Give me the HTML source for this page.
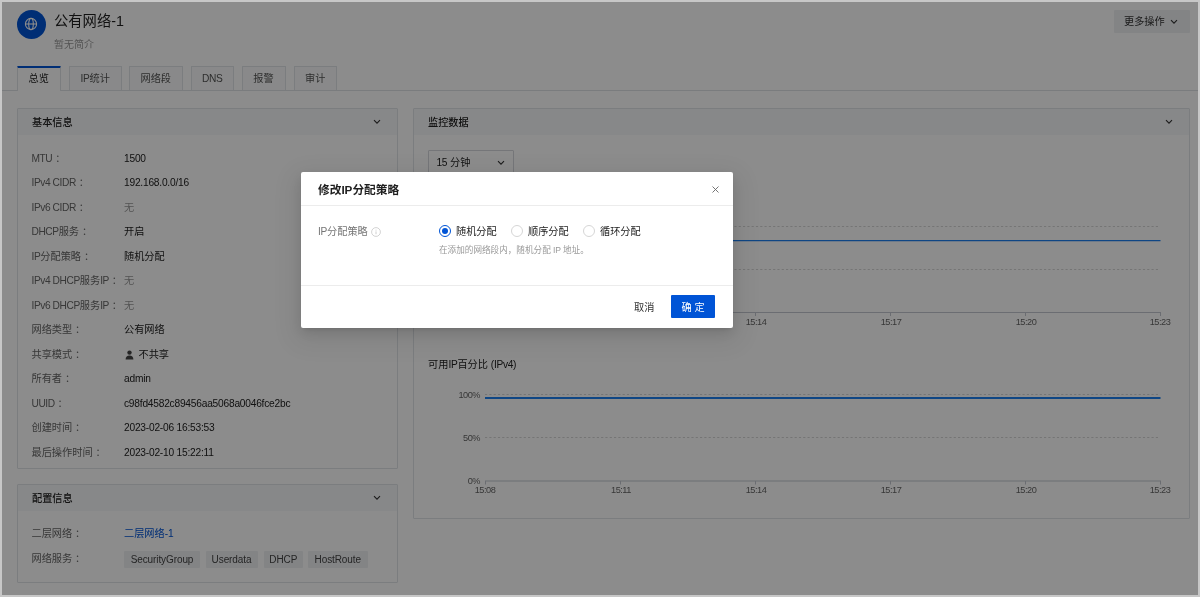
<!DOCTYPE html>
<html lang="zh-CN">
<head>
<meta charset="utf-8">
<title>公有网络-1</title>
<style>
*{box-sizing:border-box;margin:0;padding:0}
html,body{width:1200px;height:597px;overflow:hidden;background:#c7c7c7}
body{font-family:"Liberation Sans","Noto Sans CJK SC",sans-serif;font-size:10.2px;color:#333;position:relative}
#page{position:absolute;left:2px;top:2px;width:1196px;height:593px;background:#fff;overflow:hidden}
#inner{will-change:transform;position:absolute;left:-2px;top:-2px;width:1200px;height:597px}
.abs{position:absolute;white-space:nowrap}
/* header */
#logo{left:16.5px;top:10px;width:29px;height:29px;border-radius:50%;background:#0054d6}
#logo svg{position:absolute;left:7.5px;top:7px}
#title{left:54px;top:10px;font-size:14.3px;line-height:22px;color:#1f1f1f}
#desc{left:54px;top:38px;font-size:10px;line-height:14px;color:#999}
#more{left:1114px;top:10px;width:76px;height:23px;background:#eef0f3;border-radius:1px;line-height:24px;padding-left:10px;color:#333}
/* tabs */
#tabline{left:0;top:90px;width:1200px;height:1px;background:#dfe2e6}
.tab{top:66px;height:24px;border:1px solid #e1e4e8;border-bottom:none;background:#f9fafb;text-align:center;line-height:23px;color:#555;border-radius:1px 1px 0 0}
.tab.on{background:#fff;border-top:2px solid #0054d6;height:25px;color:#222;line-height:22px}
/* cards */
.card{border:1px solid #e0e3e7;background:#fff;border-radius:1px}
.chead{left:0;top:0;right:0;height:26px;background:#f6f7f9;line-height:27px;padding-left:14px;color:#222;font-weight:500}
.chev{position:absolute;right:16px;top:10px}
.lab{left:31.5px;color:#666;line-height:14px}
.val{left:124px;color:#222;line-height:14px}
.none{color:#999}
.tag{top:550.5px;height:17px;line-height:18px;background:#eef0f3;color:#444;padding:0;text-align:center;border-radius:1px;font-size:10px;letter-spacing:-.1px}
/* chart */
.ax{font-size:8.6px;color:#666;line-height:10px}
/* overlay + modal */
#mask{left:0;top:0;width:1196px;height:593px;background:rgba(0,0,0,.45)}
#modal{will-change:transform;left:301px;top:172px;width:432px;height:156px;background:#fff;border-radius:2px;box-shadow:0 3px 5px -3px rgba(0,0,0,.14),0 5px 14px 0 rgba(0,0,0,.10),0 8px 24px 7px rgba(0,0,0,.07)}
#mhead{left:0;top:0;width:432px;height:34px;border-bottom:1px solid #ececec}
#mtitle{left:17px;top:9px;font-size:11.7px;font-weight:bold;line-height:18px;color:#1f1f1f}
#mfoot{left:0;top:113px;width:432px;height:43px;border-top:1px solid #ececec}
.radio{top:53px;width:12px;height:12px;border:1px solid #d6d6d6;border-radius:50%;background:#fff}
.radio.on{border-color:#0054d6}
.radio.on::after{content:"";position:absolute;left:2px;top:2px;width:6px;height:6px;border-radius:50%;background:#0054d6}
.rl{top:52px;line-height:15px;color:#222}
#ok{left:370px;top:123px;width:44px;height:23px;background:#0054d6;color:#fff;text-align:center;line-height:25px;border-radius:1px}
.l{letter-spacing:-.3px}
.lab .l{letter-spacing:-.42px}
.val .l{letter-spacing:-.22px}
</style>
</head>
<body>
<div id="page"><div id="inner">

<div id="logo" class="abs"><svg width="14" height="14" viewBox="0 0 14 14" fill="none" stroke="#fff" stroke-width="1.1"><circle cx="7" cy="7" r="5.6"/><ellipse cx="7" cy="7" rx="2.3" ry="5.6"/><path d="M1.4 7h11.2"/></svg></div>
<div id="title" class="abs">公有网络-1</div>
<div id="desc" class="abs">暂无简介</div>
<div id="more" class="abs">更多操作 <svg width="8" height="6" viewBox="0 0 8 6" style="position:absolute;left:56px;top:9px"><path d="M1 1.2l3 3 3-3" fill="none" stroke="#333" stroke-width="1.1"/></svg></div>

<div id="tabline" class="abs"></div>
<div class="abs tab on" style="left:16.5px;width:44.5px">总览</div>
<div class="abs tab" style="left:68.5px;width:53.5px"><span class="l">IP</span>统计</div>
<div class="abs tab" style="left:129px;width:53.5px">网络段</div>
<div class="abs tab" style="left:190.5px;width:43.5px"><span class="l">DNS</span></div>
<div class="abs tab" style="left:241.5px;width:44px">报警</div>
<div class="abs tab" style="left:293.5px;width:43.5px">审计</div>

<!-- 基本信息 -->
<div class="abs card" style="left:17px;top:108px;width:381px;height:361px">
  <div class="abs chead">基本信息<svg class="chev" width="8" height="6" viewBox="0 0 8 6"><path d="M1 1.2l3 3 3-3" fill="none" stroke="#333" stroke-width="1.1"/></svg></div>
</div>
<div class="abs lab" style="top:152px"><span class="l">MTU</span> ：</div><div class="abs val" style="top:152px"><span class="l">1500</span></div>
<div class="abs lab" style="top:176px"><span class="l">IPv4 CIDR</span> ：</div><div class="abs val" style="top:176px"><span class="l">192.168.0.0/16</span></div>
<div class="abs lab" style="top:201px"><span class="l">IPv6 CIDR</span> ：</div><div class="abs val none" style="top:201px">无</div>
<div class="abs lab" style="top:225px"><span class="l">DHCP</span>服务 ：</div><div class="abs val" style="top:225px">开启</div>
<div class="abs lab" style="top:250px"><span class="l">IP</span>分配策略 ：</div><div class="abs val" style="top:250px">随机分配</div>
<div class="abs lab" style="top:274px"><span class="l">IPv4 DHCP</span>服务<span class="l">IP</span> ：</div><div class="abs val none" style="top:274px">无</div>
<div class="abs lab" style="top:299px"><span class="l">IPv6 DHCP</span>服务<span class="l">IP</span> ：</div><div class="abs val none" style="top:299px">无</div>
<div class="abs lab" style="top:323px">网络类型 ：</div><div class="abs val" style="top:323px">公有网络</div>
<div class="abs lab" style="top:348px">共享模式 ：</div><div class="abs val" style="top:348px"><svg width="9" height="10" viewBox="0 0 9 10" style="vertical-align:-1.5px;margin-left:1px;margin-right:4.5px"><circle cx="4.5" cy="2.6" r="2.2" fill="#444"/><path d="M0.6 9.6c0-3 1.6-4.2 3.9-4.2s3.9 1.2 3.9 4.2z" fill="#444"/></svg>不共享</div>
<div class="abs lab" style="top:372px">所有者 ：</div><div class="abs val" style="top:372px"><span class="l">admin</span></div>
<div class="abs lab" style="top:397px"><span class="l">UUID</span> ：</div><div class="abs val" style="top:397px"><span class="l">c98fd4582c89456aa5068a0046fce2bc</span></div>
<div class="abs lab" style="top:421px">创建时间 ：</div><div class="abs val" style="top:421px"><span class="l">2023-02-06 16:53:53</span></div>
<div class="abs lab" style="top:446px">最后操作时间 ：</div><div class="abs val" style="top:446px"><span class="l">2023-02-10 15:22:11</span></div>

<!-- 配置信息 -->
<div class="abs card" style="left:17px;top:484px;width:381px;height:99px">
  <div class="abs chead">配置信息<svg class="chev" width="8" height="6" viewBox="0 0 8 6"><path d="M1 1.2l3 3 3-3" fill="none" stroke="#333" stroke-width="1.1"/></svg></div>
</div>
<div class="abs lab" style="top:527px">二层网络 ：</div><div class="abs val" style="top:527px;color:#0054d6">二层网络<span class="l">-1</span></div>
<div class="abs lab" style="top:552px">网络服务 ：</div>
<div class="abs tag" style="left:124px;width:76px">SecurityGroup</div>
<div class="abs tag" style="left:205.5px;width:52px">Userdata</div>
<div class="abs tag" style="left:264px;width:38.5px">DHCP</div>
<div class="abs tag" style="left:308px;width:59.5px">HostRoute</div>

<!-- 监控数据 -->
<div class="abs card" style="left:413px;top:108px;width:777px;height:411px">
  <div class="abs chead">监控数据<svg class="chev" width="8" height="6" viewBox="0 0 8 6"><path d="M1 1.2l3 3 3-3" fill="none" stroke="#333" stroke-width="1.1"/></svg></div>
</div>
<div class="abs" style="left:428px;top:150px;width:86px;height:23px;border:1px solid #d5d8dc;border-radius:1px;line-height:23px;padding-left:7.5px;color:#222"><span class="l">15</span> 分钟<svg width="8" height="6" viewBox="0 0 8 6" style="position:absolute;right:8.5px;top:9px"><path d="M1 1.2l3 3 3-3" fill="none" stroke="#333" stroke-width="1.1"/></svg></div>

<svg class="abs" style="left:413px;top:180px" width="771" height="340" viewBox="413 180 771 340">
  <g stroke="#d6d6d6" stroke-width="1" stroke-dasharray="2.2 2.1">
    <path d="M485 226.5H1160"/><path d="M485 269.5H1160"/>
    <path d="M485 394.5H1160"/><path d="M485 437.5H1160"/>
  </g>
  <g stroke="#c3c7cf" stroke-width="1">
    <path d="M485 312.5H1161"/><path d="M485 481H1161"/>
    <path d="M485.5 313v3M620.5 313v3M755.5 313v3M890.5 313v3M1025.5 313v3M1160.5 313v3"/>
    <path d="M485.5 481v3.5M620.5 481v3.5M755.5 481v3.5M890.5 481v3.5M1025.5 481v3.5M1160.5 481v3.5"/>
  </g>
  <path d="M485 240.6H1160.5" stroke="#1c80f0" stroke-width="1.3"/>
  <path d="M485 397.9H1160.5" stroke="#1c80f0" stroke-width="2"/>
  <g font-size="9.2" letter-spacing="-.5" fill="#666" text-anchor="middle" font-family="'Liberation Sans','Noto Sans CJK SC',sans-serif">
    <text x="485" y="324.8">15:08</text><text x="621" y="324.8">15:11</text><text x="756" y="324.8">15:14</text><text x="891" y="324.8">15:17</text><text x="1026" y="324.8">15:20</text><text x="1160" y="324.8">15:23</text>
    <text x="485" y="493.2">15:08</text><text x="621" y="493.2">15:11</text><text x="756" y="493.2">15:14</text><text x="891" y="493.2">15:17</text><text x="1026" y="493.2">15:20</text><text x="1160" y="493.2">15:23</text>
  </g>
  <g font-size="9.2" letter-spacing="-.5" fill="#666" text-anchor="end" font-family="'Liberation Sans','Noto Sans CJK SC',sans-serif">
    <text x="480" y="397.5">100%</text><text x="480" y="440.5">50%</text><text x="480" y="483.5">0%</text>
  </g>
</svg>
<div class="abs" style="left:428px;top:358px;line-height:14px;color:#222;font-size:10.2px">可用<span class="l">IP</span>百分比 <span class="l">(IPv4)</span></div>

<div id="mask" class="abs" style="left:2px;top:2px"></div>

<!-- modal -->
<div id="modal" class="abs">
  <div id="mhead" class="abs"></div>
  <div id="mtitle" class="abs">修改IP分配策略</div>
  <svg class="abs" style="left:411px;top:13.5px" width="7" height="7" viewBox="0 0 7 7"><path d="M.5.5l6 6M6.5.5l-6 6" stroke="#666" stroke-width=".9" fill="none"/></svg>
  <div class="abs" style="left:17px;top:52px;line-height:15px;color:#757575"><span class="l">IP</span>分配策略</div><svg class="abs" style="left:70px;top:54.5px" width="10" height="10" viewBox="0 0 10 10"><circle cx="5" cy="5" r="4.4" fill="none" stroke="#c8c8c8" stroke-width=".8"/><path d="M5 4.4v2.8M5 2.7v.9" stroke="#c8c8c8" stroke-width=".9"/></svg>
  <div class="abs radio on" style="left:138px"></div><div class="abs rl" style="left:155px">随机分配</div>
  <div class="abs radio" style="left:210px"></div><div class="abs rl" style="left:227px">顺序分配</div>
  <div class="abs radio" style="left:282px"></div><div class="abs rl" style="left:299px">循环分配</div>
  <div class="abs" style="left:138px;top:72px;font-size:8.6px;line-height:12px;color:#999">在添加的网络段内，随机分配 <span class="l">IP</span> 地址。</div>
  <div id="mfoot" class="abs"></div>
  <div class="abs" style="left:333px;top:129px;line-height:14px;color:#333">取消</div>
  <div id="ok" class="abs">确 定</div>
</div>

</div></div>
</body>
</html>
